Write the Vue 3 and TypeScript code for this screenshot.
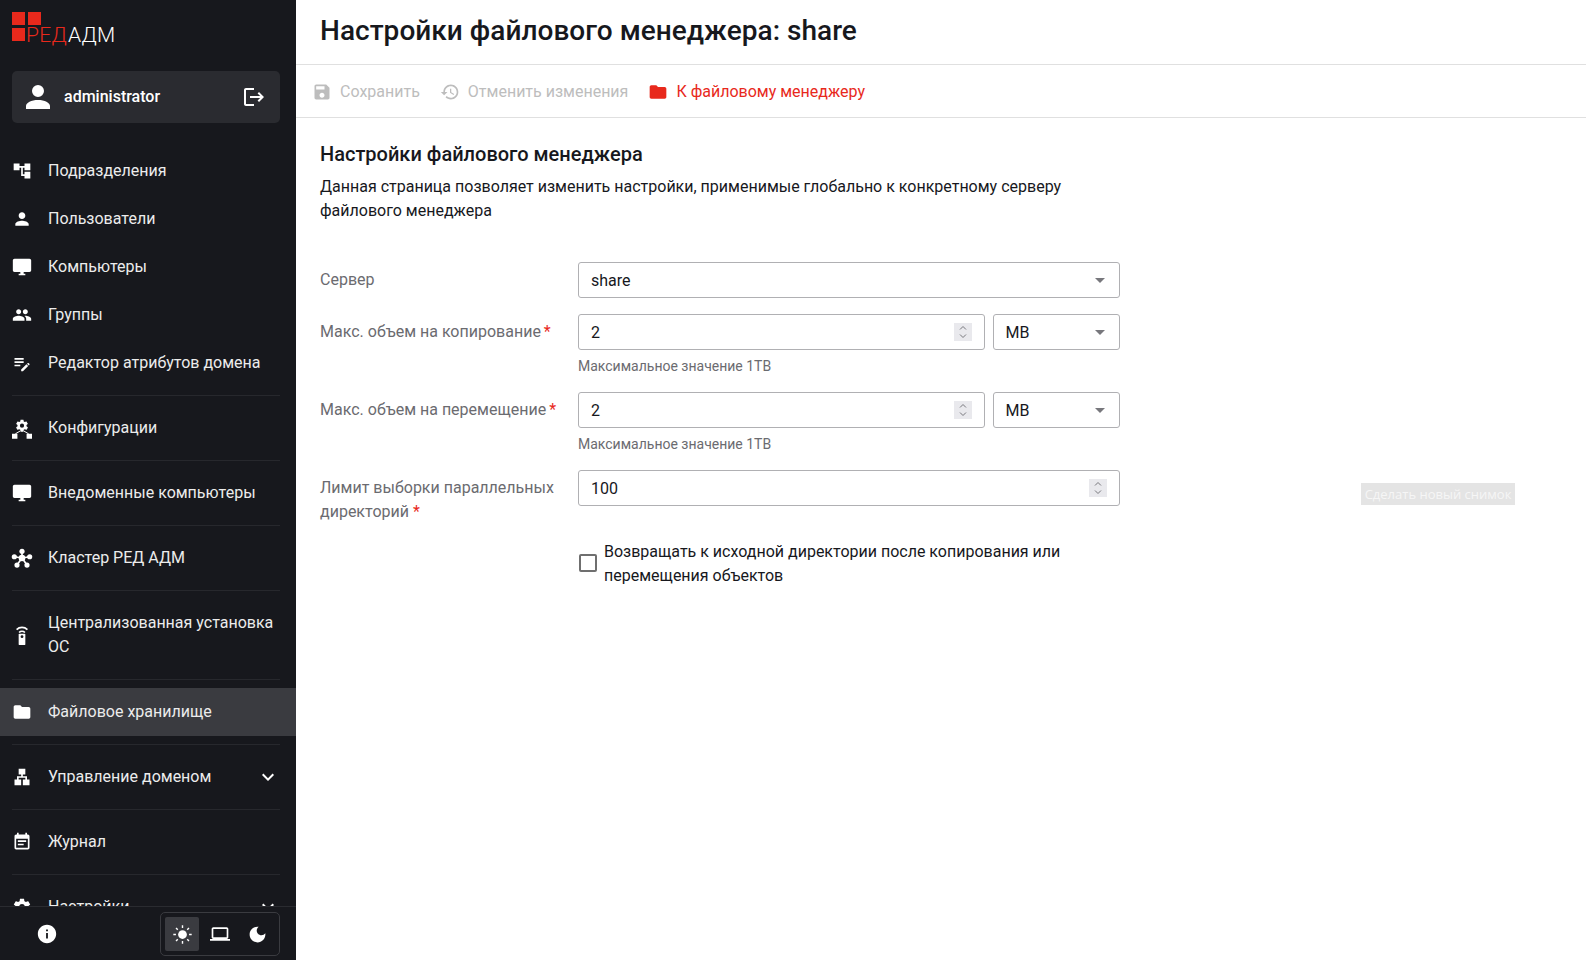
<script setup lang="ts">
import { reactive } from 'vue'

const cog = 'M12,15.5A3.5,3.5 0 0,1 8.5,12A3.5,3.5 0 0,1 12,8.5A3.5,3.5 0 0,1 15.5,12A3.5,3.5 0 0,1 12,15.5M19.43,12.97C19.47,12.65 19.5,12.33 19.5,12C19.5,11.67 19.47,11.34 19.43,11L21.54,9.37C21.73,9.22 21.78,8.95 21.66,8.73L19.66,5.27C19.54,5.05 19.27,4.96 19.05,5.05L16.56,6.05C16.04,5.66 15.5,5.32 14.87,5.07L14.5,2.42C14.46,2.18 14.25,2 14,2H10C9.75,2 9.54,2.18 9.5,2.42L9.13,5.07C8.5,5.32 7.96,5.66 7.44,6.05L4.95,5.05C4.73,4.96 4.46,5.05 4.34,5.27L2.34,8.73C2.21,8.95 2.27,9.22 2.46,9.37L4.57,11C4.53,11.34 4.5,11.67 4.5,12C4.5,12.33 4.53,12.65 4.57,12.97L2.46,14.63C2.27,14.78 2.21,15.05 2.34,15.27L4.34,18.73C4.46,18.95 4.73,19.03 4.95,18.95L7.44,17.94C7.96,18.34 8.5,18.68 9.13,18.93L9.5,21.58C9.54,21.82 9.75,22 10,22H14C14.25,22 14.46,21.82 14.5,21.58L14.87,18.93C15.5,18.67 16.04,18.34 16.56,17.94L19.05,18.95C19.27,19.03 19.54,18.95 19.66,18.73L21.66,15.27C21.78,15.05 21.73,14.78 21.54,14.63L19.43,12.97Z'
const desktop = 'M21 2H3c-1.1 0-2 .9-2 2v12c0 1.1.9 2 2 2h7v2H8v2h8v-2h-2v-2h7c1.1 0 2-.9 2-2V4c0-1.1-.9-2-2-2z'
const folder = 'M10 4H4c-1.1 0-1.99.9-1.99 2L2 18c0 1.1.9 2 2 2h16c1.1 0 2-.9 2-2V8c0-1.1-.9-2-2-2h-8l-2-2z'

interface NavItem { label: string; icon: string; chevron?: boolean; active?: boolean; custom?: string }

const groups: NavItem[][] = [
  [
    { label: 'Подразделения', icon: 'M22 11V3h-7v3H9V3H2v8h7V8h2v10h4v3h7v-8h-7v3h-2V8h2v3z' },
    { label: 'Пользователи', icon: 'M12 12c2.210 0 4-1.790 4-4s-1.790-4-4-4-4 1.790-4 4 1.790 4 4 4zm0 2c-2.670 0-8 1.340-8 4v2h16v-2c0-2.660-5.330-4-8-4z' },
    { label: 'Компьютеры', icon: desktop },
    { label: 'Группы', icon: 'M16 11c1.660 0 2.990-1.340 2.990-3S17.660 5 16 5c-1.660 0-3 1.340-3 3s1.340 3 3 3zm-8 0c1.660 0 2.990-1.340 2.990-3S9.660 5 8 5C6.340 5 5 6.340 5 8s1.340 3 3 3zm0 2c-2.330 0-7 1.170-7 3.500V19h14v-2.500c0-2.330-4.670-3.500-7-3.500zm8 0c-.290 0-.620.020-.970.050 1.160.840 1.970 1.970 1.970 3.450V19h6v-2.500c0-2.330-4.670-3.500-7-3.500z' },
    { label: 'Редактор атрибутов домена', icon: 'M3 10h11v2H3zm0-4h11v2H3zm0 8h7v2H3zm15.010-1.130.710-.710c.390-.390 1.020-.390 1.410 0l.710.710c.390.390.390 1.020 0 1.410l-.710.710zm-.710.710L11 19.880V22h2.120l6.300-6.300z' },
  ],
  [{ label: 'Конфигурации', icon: '', custom: 'config' }],
  [{ label: 'Внедоменные компьютеры', icon: desktop }],
  [{ label: 'Кластер РЕД АДМ', icon: '', custom: 'cluster' }],
  [{ label: 'Централизованная установка ОС', icon: '', custom: 'remote' }],
  [{ label: 'Файловое хранилище', icon: folder, active: true }],
  [{ label: 'Управление доменом', icon: 'M13 22h8v-7h-3v-4h-5V9h3V2H8v7h3v2H6v4H3v7h8v-7H8v-2h8v2h-3z', chevron: true }],
  [{ label: 'Журнал', icon: 'M17 10H7v2h10v-2zm2-7h-1V1h-2v2H8V1H6v2H5c-1.110 0-1.990.9-1.990 2L3 19c0 1.100.890 2 2 2h14c1.100 0 2-.9 2-2V5c0-1.100-.9-2-2-2zm0 16H5V8h14v11zm-5-5H7v2h7v-2z' }],
  [{ label: 'Настройки', icon: cog, chevron: true }],
]

const form = reactive({ server: 'share', copy: '2', move: '2', limit: '100' })
</script>

<template>
  <div class="page">
    <aside class="sidebar">
      <div class="logo">
        <i class="sq"></i><i class="sq"></i><i class="sq"></i>
        <span class="logo-text"><span class="red">РЕД</span>АДМ</span>
      </div>

      <div class="user">
        <svg class="user-icon" viewBox="0 0 24 24"><path d="M12 4a4 4 0 1 1 0 8 4 4 0 0 1 0-8zm0 10c4.420 0 8 1.790 8 4v2H4v-2c0-2.210 3.580-4 8-4z" /></svg>
        <span class="user-name">administrator</span>
        <svg class="logout" viewBox="0 0 24 24"><path d="M17 7l-1.410 1.410L18.170 11H8v2h10.170l-2.580 2.580L17 17l5-5zM4 5h8V3H4c-1.100 0-2 .9-2 2v14c0 1.100.9 2 2 2h8v-2H4V5z" /></svg>
      </div>

      <nav class="nav">
        <div v-for="(group, i) in groups" :key="i" class="group">
          <a v-for="item in group" :key="item.label" class="item" :class="{ active: item.active }">
            <svg class="nav-icon" viewBox="0 0 24 24">
              <path v-if="!item.custom" :d="item.icon" />
              <template v-else-if="item.custom === 'config'">
                <path :d="cog" transform="translate(3.360 .56) scale(.72)" />
                <path d="M0 19h6.500v6H0zM17.500 19H24v6h-6.500z" />
                <path class="thin" d="M4 19l6-3.500M20 19l-6-3.500" />
              </template>
              <template v-else-if="item.custom === 'cluster'">
                <circle cx="12" cy="12" r="4" />
                <circle cx="12" cy="4" r="3.100" />
                <circle cx="2.800" cy="10.500" r="3.100" />
                <circle cx="21.200" cy="10.500" r="3.100" />
                <circle cx="6" cy="20.500" r="3.100" />
                <circle cx="18" cy="20.500" r="3.100" />
                <path class="line" d="M12 4v8M3 10.500 12 12l9-1.500M6 20.500l6-8.500 6 8.500" />
              </template>
              <template v-else>
                <path d="M9 10.400h6a1 1 0 0 1 1 1V23a1 1 0 0 1-1 1H9a1 1 0 0 1-1-1V11.400a1 1 0 0 1 1-1z" />
                <circle class="hole" cx="12" cy="14" r="1.700" />
                <path class="line" d="M8.500 9a5 5 0 0 1 7 0M5.500 5.500a9.500 9.500 0 0 1 13 0" />
              </template>
            </svg>
            <span class="item-label">{{ item.label }}</span>
            <svg v-if="item.chevron" class="chevron" viewBox="0 0 24 24"><path d="M7.410 8.590 12 13.170l4.590-4.580L18 10l-6 6-6-6z" /></svg>
          </a>
        </div>
      </nav>

      <footer class="side-foot">
        <svg class="info" viewBox="0 0 24 24"><path d="M12 2C6.480 2 2 6.480 2 12s4.480 10 10 10 10-4.480 10-10S17.520 2 12 2zm1 15h-2v-6h2v6zm0-8h-2V7h2v2z" /></svg>
        <div class="theme">
          <button class="theme-btn on" type="button">
            <svg viewBox="0 0 24 24"><circle cx="12" cy="12" r="5" /><path class="ray" d="M12 1.500v3M12 19.500v3M1.500 12h3M19.500 12h3M4.600 4.600l2 2M17.400 17.400l2 2M4.600 19.400l2-2M17.400 6.600l2-2" /></svg>
          </button>
          <button class="theme-btn laptop" type="button">
            <svg viewBox="0 0 24 24"><path d="M20 18c1.100 0 1.990-.9 1.990-2L22 6c0-1.100-.9-2-2-2H4c-1.100 0-2 .9-2 2v10c0 1.100.9 2 2 2H0v2h24v-2h-4zM4 6h16v10H4V6z" /></svg>
          </button>
          <button class="theme-btn" type="button">
            <svg viewBox="0 0 24 24"><path d="M12 3c-4.970 0-9 4.030-9 9s4.030 9 9 9 9-4.030 9-9c0-.460-.040-.920-.100-1.360-.980 1.370-2.580 2.260-4.400 2.260-2.980 0-5.400-2.420-5.400-5.400 0-1.810.890-3.420 2.260-4.400-.440-.060-.9-.1-1.360-.1z" /></svg>
          </button>
        </div>
      </footer>
    </aside>

    <main class="main">
      <header class="head"><h1>Настройки файлового менеджера: share</h1></header>

      <div class="toolbar">
        <a class="tool off">
          <svg viewBox="0 0 24 24"><path d="M17 3H5c-1.110 0-2 .9-2 2v14c0 1.100.890 2 2 2h14c1.100 0 2-.9 2-2V7l-4-4zm-5 16c-1.660 0-3-1.340-3-3s1.340-3 3-3 3 1.340 3 3-1.340 3-3 3zm3-10H5V5h10v4z" /></svg>
          Сохранить
        </a>
        <a class="tool off">
          <svg viewBox="0 0 24 24"><path d="M13 3c-4.970 0-9 4.030-9 9H1l3.890 3.890.070.140L9 12H6c0-3.870 3.130-7 7-7s7 3.130 7 7-3.130 7-7 7c-1.930 0-3.680-.790-4.940-2.060l-1.420 1.420C8.270 19.990 10.510 21 13 21c4.970 0 9-4.030 9-9s-4.030-9-9-9zm-1 5v5l4.280 2.540.720-1.210-3.500-2.080V8H12z" /></svg>
          Отменить изменения
        </a>
        <a class="tool link">
          <svg viewBox="0 0 24 24"><path :d="folder" /></svg>
          К файловому менеджеру
        </a>
      </div>

      <section class="content">
        <h2>Настройки файлового менеджера</h2>
        <p class="desc">Данная страница позволяет изменить настройки, применимые глобально к конкретному серверу файлового менеджера</p>

        <div class="form">
          <label class="lbl">Сервер</label>
          <div class="field">
            <div class="box grow">
              <span class="val">{{ form.server }}</span>
              <i class="caret"></i>
            </div>
          </div>

          <label class="lbl">Макс. объем на копирование <b>*</b></label>
          <div class="field">
            <div class="pair">
              <div class="box grow">
                <input v-model="form.copy" class="val" />
                <span class="spin"><svg viewBox="0 0 18 18"><path d="M6 6.500 9 3.500l3 3M6 11.500l3 3 3-3" /></svg></span>
              </div>
              <div class="box unit"><span class="val">MB</span><i class="caret"></i></div>
            </div>
            <div class="hint">Максимальное значение 1ТВ</div>
          </div>

          <label class="lbl">Макс. объем на перемещение <b>*</b></label>
          <div class="field">
            <div class="pair">
              <div class="box grow">
                <input v-model="form.move" class="val" />
                <span class="spin"><svg viewBox="0 0 18 18"><path d="M6 6.500 9 3.500l3 3M6 11.500l3 3 3-3" /></svg></span>
              </div>
              <div class="box unit"><span class="val">MB</span><i class="caret"></i></div>
            </div>
            <div class="hint">Максимальное значение 1ТВ</div>
          </div>

          <label class="lbl">Лимит выборки параллельных директорий <b class="wide">*</b></label>
          <div class="field">
            <div class="box grow">
              <input v-model="form.limit" class="val" />
              <span class="spin"><svg viewBox="0 0 18 18"><path d="M6 6.500 9 3.500l3 3M6 11.500l3 3 3-3" /></svg></span>
            </div>
          </div>

          <div></div>
          <div class="check">
            <i class="checkbox"></i>
            <span>Возвращать к исходной директории после копирования или перемещения объектов</span>
          </div>
        </div>
      </section>

      <div class="snapshot">Сделать новый снимок</div>
    </main>
  </div>
</template>

<style>
html, body { margin: 0; height: 100%; overflow: hidden; background: #fff; }
</style>

<style scoped>
.page { display: flex; height: 100vh; font-family: Roboto, "Liberation Sans", sans-serif; font-size: 16px; line-height: 24px; color: #17181d; }

.sidebar { width: 296px; flex: none; display: flex; flex-direction: column; background: #17181d; color: #ececec; }
.logo { display: grid; grid-template-columns: 13px auto; grid-template-rows: 13px 13px; gap: 3px; padding: 12px 12px 0; height: 59px; box-sizing: border-box; flex: none; }
.sq { display: block; width: 13px; height: 13px; background: #e8291c; }
.logo-text { font-weight: 300; font-size: 21px; line-height: 15px; letter-spacing: .3px; color: #fff; margin-left: -2px; white-space: nowrap; }
.red { color: #e8291c; margin-right: 1px; }

.user { flex: none; display: flex; align-items: center; height: 52px; margin: 12px 16px 24px 12px; padding: 0 14px 0 8px; background: #2a2b30; border-radius: 5px; box-sizing: border-box; }
.user-icon { width: 36px; height: 36px; margin-right: 8px; fill: #fff; }
.user-name { flex: 1; font-weight: 500; color: #fff; }
.logout { width: 24px; height: 24px; fill: #fff; }

.nav { flex: 1; min-height: 0; overflow: hidden; }
.group { padding-bottom: 8px; }
.group + .group::before { content: ""; display: block; height: 1px; margin: 0 16px 8px 12px; background: #27282d; }
.item { display: flex; align-items: center; min-height: 48px; padding: 12px 16px 12px 12px; box-sizing: border-box; gap: 16px; color: #ececec; }
.item.active { background: #3a3b40; }
.item-label { flex: 1; }
.nav-icon { width: 20px; height: 20px; flex: none; fill: #fff; overflow: visible; }
.line { fill: none; stroke: #fff; stroke-width: 2; }
.thin { fill: none; stroke: #fff; stroke-width: 1.200; }
.hole { fill: #17181d; }
.chevron { width: 24px; height: 24px; flex: none; fill: #fff; }

.side-foot { flex: none; height: 54px; box-sizing: border-box; border-top: 1px solid #2a2b30; display: flex; align-items: center; padding: 1px 16px 0 36px; justify-content: space-between; background: #17181d; }
.info { width: 22px; height: 22px; fill: #fff; }
.theme { display: flex; align-items: center; height: 44px; width: 120px; box-sizing: border-box; border: 1px solid #3a3b40; border-radius: 5px; padding: 4px 0 4px 4px; }
.theme-btn { width: 38px; height: 34px; flex: none; padding: 0; border: 0; background: transparent; display: flex; align-items: center; justify-content: center; }
.theme-btn:first-child { width: 34px; }
.theme-btn.laptop { width: 37px; margin-left: 2px; }
.theme-btn.on { background: #3a3b40; border-radius: 2px; }
.theme-btn svg { width: 21px; height: 21px; fill: #fff; }
.theme-btn.laptop svg { width: 20px; height: 20px; }
.ray { stroke: #fff; stroke-width: 1.600; fill: none; }

.main { flex: 1; min-width: 0; position: relative; }
.head { height: 65px; box-sizing: border-box; border-bottom: 1px solid #e0e0e0; display: flex; align-items: center; padding: 0 24px 2px; }
h1 { margin: 0; font-size: 28px; font-weight: 500; line-height: 36px; letter-spacing: .03px; }
.toolbar { height: 53px; box-sizing: border-box; border-bottom: 1px solid #e0e0e0; display: flex; align-items: center; gap: 20px; padding: 2px 16px 0; }
.tool { display: flex; align-items: center; gap: 8px; }
.tool svg { width: 20px; height: 20px; fill: currentColor; }
.off { color: #bdbdbd; }
.link { color: #e8291c; }

.content { padding: 23px 24px 0; width: 800px; box-sizing: content-box; }
h2 { margin: 0; font-size: 20px; font-weight: 500; line-height: 26px; }
.desc { margin: 8px 0 0; }
.form { display: grid; grid-template-columns: 258px 542px; row-gap: 16px; margin-top: 39px; }
.lbl { color: #6b6b70; padding: 6px 16px 0 0; }
.lbl b { color: #e8291c; font-weight: 400; margin-left: -1px; }
.lbl b.wide { margin-left: 0; }
.field { min-width: 0; }
.pair { display: flex; gap: 8px; }
.box { display: flex; align-items: center; height: 36px; box-sizing: border-box; border: 1px solid #b0b0b3; border-radius: 3px; padding: 0 12px; }
.grow { flex: 1; min-width: 0; }
.unit { width: 127px; flex: none; padding-left: 11.500px; }
.val { flex: 1; min-width: 0; border: 0; outline: 0; padding: 2px 0 0; background: none; font: inherit; color: inherit; }
.caret { width: 0; height: 0; border-left: 5.500px solid transparent; border-right: 5.500px solid transparent; border-top: 5px solid #77777c; margin-right: 2px; }
.spin { width: 18px; height: 18px; background: #e9e9ed; flex: none; }
.spin svg { display: block; width: 18px; height: 18px; fill: none; stroke: #77777c; stroke-width: 1; }
.hint { margin-top: 6px; font-size: 14px; line-height: 20px; color: #6b6b70; }
.check { display: flex; align-items: center; gap: 7px; }
.checkbox { display: block; flex: none; width: 14px; height: 14px; border: 2px solid #6f6f6f; border-radius: 2px; margin: 0 0 2px 1px; }

.snapshot { position: absolute; left: 1065px; top: 483px; width: 154px; height: 22px; background: #e4e4e4; color: #f6f6f6; font: 13px/22px "Open Sans", sans-serif; text-align: center; white-space: nowrap; overflow: hidden; }
</style>
